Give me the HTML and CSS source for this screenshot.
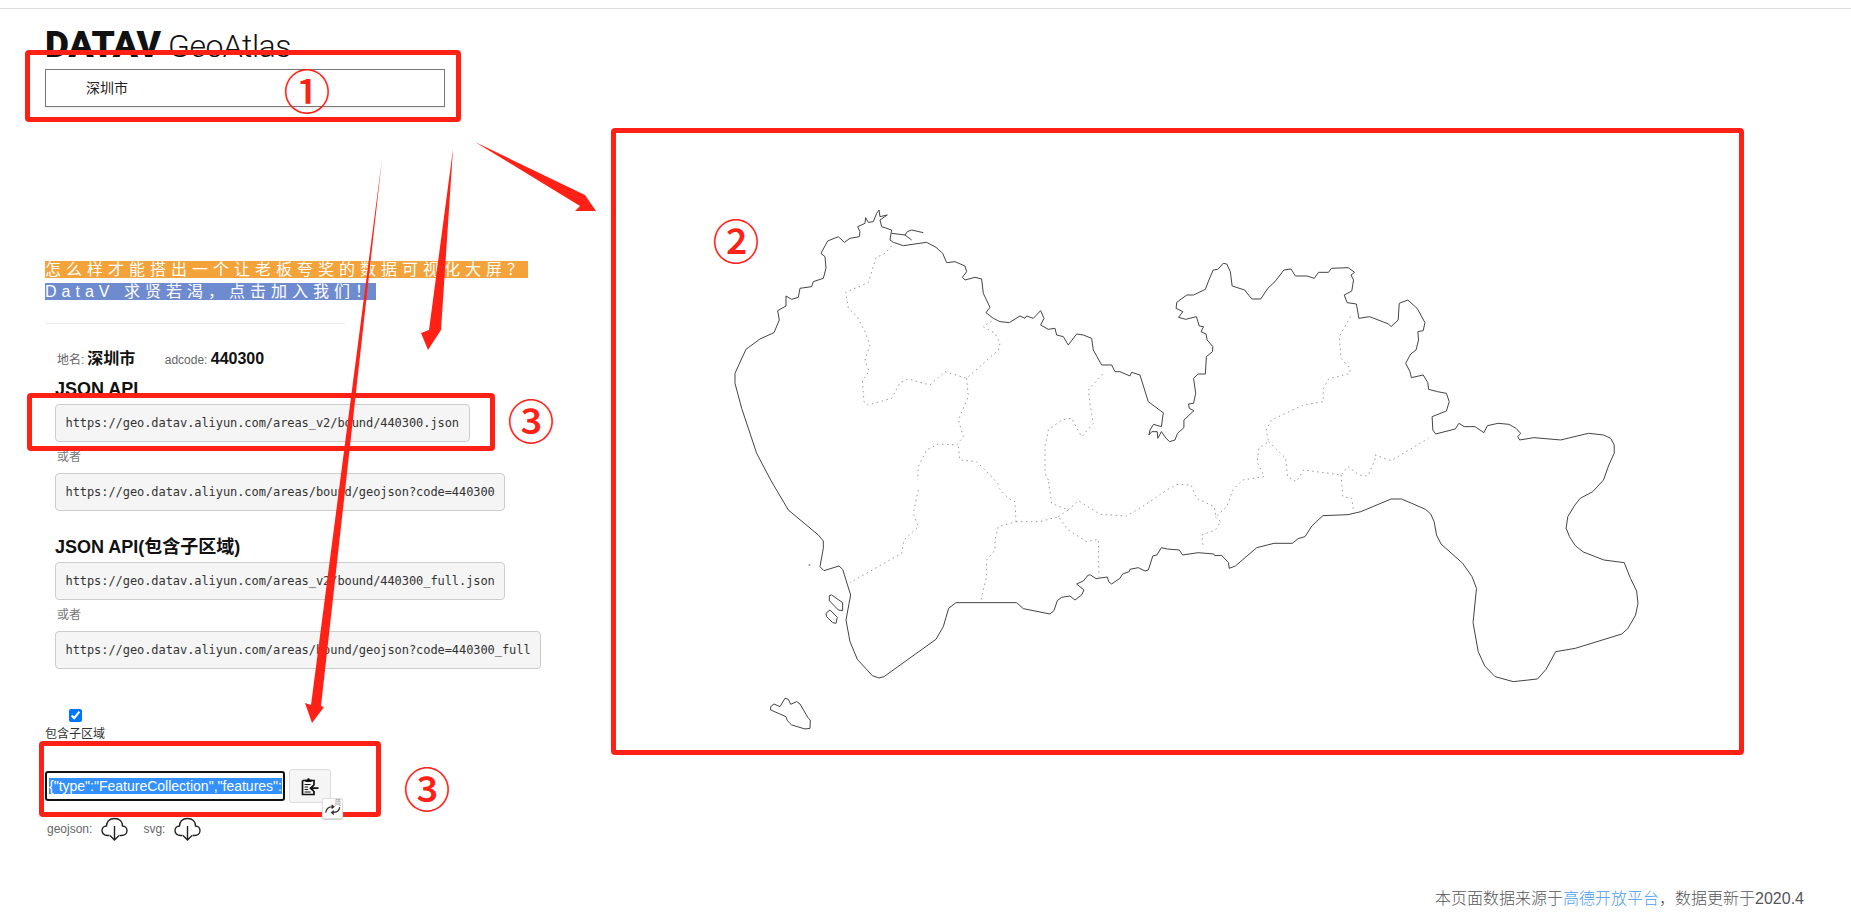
FILE: index.html
```html
<!DOCTYPE html>
<html lang="zh-CN">
  <head>
    <meta charset="utf-8" />
    <title>DataV GeoAtlas</title>
    <link rel="stylesheet" href="styles.css">
  </head>
  <body>
    <div class="top-line"></div>

    <div class="layout">
      <aside class="side">
        <div class="logo"><b>DATAV</b> <span>GeoAtlas</span></div>
        <div class="search">深圳市</div>

        <div class="banner">
          <span class="banner-line orange">怎么样才能搭出一个让老板夸奖的数据可视化大屏？</span>
          <span class="banner-line blue">DataV 求贤若渴，点击加入我们！</span>
        </div>
        <div class="divider"></div>

        <div class="info">
          <span class="info-label">地名:</span><strong class="place">深圳市</strong>
          <span class="info-label adcode">adcode:</span> <strong>440300</strong>
        </div>

        <div class="api">
          <h3>JSON API</h3>
          <pre>https://geo.datav.aliyun.com/areas_v2/bound/440300.json</pre>
          <p class="or">或者</p>
          <pre>https://geo.datav.aliyun.com/areas/bound/geojson?code=440300</pre>
          <h3 class="second">JSON API(包含子区域)</h3>
          <pre>https://geo.datav.aliyun.com/areas_v2/bound/440300_full.json</pre>
          <p class="or">或者</p>
          <pre>https://geo.datav.aliyun.com/areas/bound/geojson?code=440300_full</pre>
        </div>

        <label class="toggle">
          <input type="checkbox" checked />
          <span>包含子区域</span>
        </label>

        <div class="copy-row">
          <div class="json-box"><span class="selected">{"type":"FeatureCollection","features":</span></div>
          <button class="copy-btn" type="button">
            <svg width="18" height="19" viewBox="0 0 18 19">
              <path d="M1.500 3.500h3.500M10 3.500h3v5M13 14v3.500H1.500V3.500" fill="none" stroke="#111" stroke-width="1.700" />
              <path d="M4.500 5V2.600h1.700a1.300 1.300 0 0 1 2.600 0h1.700V5z" fill="#111" />
              <path d="M3.600 7.500h6M3.600 10h3.500M3.600 12.500h3.500M3.600 15h6" stroke="#111" stroke-width="1.100" />
              <path d="M17.500 11.200H10M12.800 8.200l-3.300 3 3.300 3" fill="none" stroke="#111" stroke-width="1.800" />
            </svg>
          </button>
        </div>

        <div class="downloads">
          <span>geojson:</span>
          <svg class="cloud" width="27" height="24" viewBox="0 0 27 24">
            <path d="M8.500 18.500H6.500C3 18.500 1 16 1 13.500C1 11 3 9 5.500 9C5.500 5 8 1.500 13.500 1.500C19 1.500 21.500 5 21.500 9C24 9 26 11 26 13.500C26 16 24 18.500 20.500 18.500H18.500" fill="none" stroke="#222" stroke-width="1.400" />
            <path d="M13.500 9V23M9 18.500l4.500 4.500 4.500-4.500" fill="none" stroke="#222" stroke-width="1.400" />
          </svg>
          <span class="dl-svg">svg:</span>
          <svg class="cloud" width="27" height="24" viewBox="0 0 27 24">
            <path d="M8.500 18.500H6.500C3 18.500 1 16 1 13.500C1 11 3 9 5.500 9C5.500 5 8 1.500 13.500 1.500C19 1.500 21.500 5 21.500 9C24 9 26 11 26 13.500C26 16 24 18.500 20.500 18.500H18.500" fill="none" stroke="#222" stroke-width="1.400" />
            <path d="M13.500 9V23M9 18.500l4.500 4.500 4.500-4.500" fill="none" stroke="#222" stroke-width="1.400" />
          </svg>
        </div>
      </aside>

      <!-- map traced in page coordinates, one group per traced region -->
      <svg class="map" width="1133" height="627" viewBox="611 128 1133 627">
        <g transform="translate(700 190) scale(.3333)">
          <polyline class="coast" points="212,870 170,790 125,655 105,580 105,550 138,478 180,447 222,428 238,390 233,362 258,348 258,318 275,328 295,322 300,295 335,290 340,275 370,265 378,235 375,200 363,190 383,153 415,140 433,157 450,145 478,140 480,125 473,110 495,100 497,83 505,97 520,95 530,70 537,60 540,80 562,75 540,90 545,110 575,120 570,150 580,157 610,167 680,157 708,172 728,190 740,218 765,215 795,228 800,245 787,262 795,270 825,262 845,267 850,310 870,352 858,368 880,385 900,395 928,398 960,378 975,385 980,378 1000,385 1022,362 1032,385 1022,405 1045,418 1065,415 1070,435 1090,440 1105,465 1130,432 1150,435 1175,445 1180,480 1205,525 1235,525 1245,545 1260,545 1290,558 1295,547 1320,555 1345,635 1392,670" />
          <polyline class="coast" points="575,130 615,135 635,150" />
          <polyline class="coast" points="615,135 622,125 635,120 670,128" />
          <polyline class="border" points="575,168 555,190 528,203 505,278 437,307 445,355 470,378 495,425 510,465 495,510 507,545 487,570 492,635 505,645 575,625 600,578 625,567 690,585 735,545 800,565 895,480 900,460 885,430 850,410 880,390" />
          <polyline class="border" points="800,565 805,620 775,690 790,740 770,765 715,762 680,780 655,830 653,870" />
          <polyline class="border" points="775,770 780,810 830,815 870,855 897,885" />
          <polyline class="border" points="1045,870 1035,850 1035,770 1045,720 1085,690 1115,685 1145,740 1180,700 1170,640 1165,600 1215,545" />
        </g>

        <g transform="translate(1100 230) scale(.3571 .3333)">
          <polyline class="coast" points="177,550 172,590 150,583 140,600 137,615 145,605 160,605 162,625 172,605 185,625 195,635 210,630 217,610 235,593 235,570 263,542 250,535 248,522 262,520 268,490 262,445 275,432 295,432 298,380 315,365 316,350 300,330 297,312 283,305 290,290 278,288 270,260 240,268 220,262 232,245 213,235 215,217 243,195 262,195 295,178 305,150 317,120 330,118 345,100 355,102 365,125 370,168 405,180 425,207 450,207 470,175 490,155 515,120 535,117 547,138 580,138 600,145 612,127 640,127 648,115 695,113 713,127 703,135 710,150 705,183 684,195 692,218 718,222 725,265 755,260 808,282 815,290 835,270 838,220 862,210 888,235 900,258 910,278 905,302 890,305 892,330 885,360 870,372 856,400 868,425 872,443 905,435 918,458 920,478 945,485 970,490 978,515 970,543 930,560 932,600 940,612 995,597 1005,580 1020,590 1050,590 1075,608 1085,587 1115,580 1145,583 1165,595 1178,610 1170,620 1175,630 1215,623 1290,630 1368,610 1410,615 1430,625 1440,645 1440,670 1425,705 1410,750 1380,785 1345,805 1330,825 1310,860 1305,897" />
          <polyline class="border" points="215,763 255,765 270,805 320,830 325,860 355,830 372,780 400,750 460,740 440,695 445,655 472,635 465,600 480,570 570,525 625,515 625,478 640,447 700,430 700,415 675,385 670,320 705,253" />
          <polyline class="border" points="472,635 520,685 525,740 550,755 570,720 675,735 695,710 725,735 750,738 770,690 770,675 815,692 920,625" />
          <polyline class="border" points="675,735 680,800 705,805 710,845" />
        </g>

        <g transform="translate(1150 480) scale(.3444 .3333)">
          <polyline class="coast" points="1209,146 1218,170 1235,197 1258,216 1318,240 1377,248 1395,295 1413,333 1417,370 1410,405 1388,445 1370,462 1235,505 1178,515 1150,568 1125,597 1055,605 1002,590 972,558 953,515 938,428 948,325 935,290 908,250 845,192 832,165 825,125 815,102 800,88 760,70 730,57 700,57 612,95 575,104 502,107 470,138 450,170 430,176 413,190 360,190 310,203 248,258 230,265 228,248 208,226 188,227 185,222 140,218 95,225 85,210 50,207 33,203 20,225 8,228 0,255" />
          <polyline class="border" points="190,110 205,125 190,150 150,165 155,205" />
        </g>

        <g transform="translate(700 480) scale(.3333)">
          <polyline class="coast" points="1350,255 1345,270 1335,273 1315,263 1290,268 1288,275 1268,282 1260,295 1235,312 1226,305 1222,291 1188,296 1172,285 1165,285 1150,303 1130,312 1152,330 1145,345 1125,360 1110,348 1085,352 1072,362 1062,392 1050,402 970,386 950,368 768,368 746,385 730,440 708,478 552,590 537,594 517,587 472,538 450,485 438,420 452,345 428,268 417,258 372,272 360,260 370,205 370,183 355,165 265,90 212,0" />
          <polygon class="coast" points="212,680 222,672 240,680 255,655 265,658 272,673 290,665 300,672 325,715 331,720 330,745 315,747 275,735 262,722 258,710 212,690" />
          <polygon class="coast" points="388,347 395,345 428,368 428,392 415,390 388,362" />
          <polygon class="coast" points="378,400 390,390 412,412 408,430 398,428 380,410" />
          <polyline class="coast" points="326,255 331,255" />
          <polyline class="border" points="655,30 640,100 655,140 612,180 605,220 450,308" />
          <polyline class="border" points="897,25 925,55 945,65 948,125 895,140 885,180 885,210 860,240 860,290 845,350 843,365" />
          <polyline class="border" points="948,125 1020,125 1075,110 1105,150 1160,185 1195,178 1197,290" />
          <polyline class="border" points="1075,110 1105,90 1055,70 1045,0" />
          <polyline class="border" points="1105,90 1135,62 1200,103 1280,108 1335,75 1400,30 1435,12" />
        </g>
      </svg>
    </div>

    <footer class="source">本页面数据来源于<a href="#">高德开放平台</a>，数据更新于2020.4</footer>

    <!-- red notes drawn over the page -->
    <svg class="arrows" width="1851" height="922" viewBox="0 0 1851 922">
      <polygon points="475,142 585,195 596,211 575,211 580,206" />
      <polygon points="453,149 441,330 439,333 428,350 421,333 429,330" />
      <polygon points="382,159 321,706 324,707 312,723 305,703 311,705" />
    </svg>
    <div class="note-box note-search"></div>
    <div class="note-box note-map"></div>
    <div class="note-box note-api"></div>
    <div class="note-box note-copy"></div>
    <span class="note-num num-one">①</span>
    <span class="note-num num-two">②</span>
    <span class="note-num num-three-a">③</span>
    <span class="note-num num-three-b">③</span>

    <div class="translate-badge">
      <svg width="19" height="19" viewBox="0 0 21 21">
        <path d="M3 15C4 10 7 8.500 11 8.500M9.500 6.500l2.500 2-2.500 2" fill="none" stroke="#333" stroke-width="1.400" />
        <path d="M18.500 9C18 13 15 15 10.500 15M12 13l-2.500 2 2.500 2" fill="none" stroke="#333" stroke-width="1.400" />
        <text x="13" y="7" class="badge-char">简</text>
      </svg>
    </div>
  </body>
</html>
```

FILE: styles.css
```css
:root {
  --red: #ff2116;
  --font: "Liberation Sans", "Noto Sans CJK SC", sans-serif;
}

* {
  box-sizing: border-box;
}

html,
body {
  margin: 0;
  height: 922px;
  overflow: hidden;
  background: #fff;
  color: #333;
  font-family: var(--font);
  font-size: 12px;
}

body {
  position: relative;
}

.top-line {
  height: 9px;
  border-bottom: 1px solid #ddd;
}

.layout {
  display: flex;
  height: 832px;
}

.side {
  flex: none;
  width: 611px;
  padding-left: 45px;
}

.logo {
  margin-top: 24px;
  height: 24px;
  line-height: 24px;
  font-family: Roboto, sans-serif;
  font-size: 32px;
  word-spacing: -1px;
  color: #111;
  white-space: nowrap;
}

.logo b {
  font-size: 37px;
  font-weight: 900;
}

.logo span {
  font-weight: 300;
  letter-spacing: -0.5px;
}

.search {
  position: relative;
  margin-top: 12px;
  width: 400px;
  height: 38px;
  padding-left: 40px;
  line-height: 36px;
  font-size: 14px;
  color: #222;
  background: #fff;
  border: 1px solid #777;
  box-shadow: 0 2px 2px #eee;
}

.banner {
  margin-top: 154px;
}

.banner-line {
  display: block;
  width: fit-content;
  height: 17px;
  line-height: 17px;
  margin-bottom: 5px;
  font-size: 16px;
  letter-spacing: 5px;
  color: #fff;
  white-space: nowrap;
}

.orange {
  background: #f4a23a;
}

.blue {
  background: #6f8bd0;
}

.divider {
  margin-top: 23px;
  width: 300px;
  height: 1px;
  background: #eee;
}

.info {
  margin-top: 25px;
  padding-left: 12px;
  height: 20px;
  line-height: 20px;
  white-space: nowrap;
}

.info-label {
  color: #666;
}

.info strong {
  font-size: 16px;
  color: #111;
}

.info .place {
  margin-left: 3px;
}

.adcode {
  margin-left: 26px;
}

.api {
  padding-left: 10px;
}

.api h3 {
  margin: 10px 0 5px;
  height: 20px;
  line-height: 20px;
  font-size: 18px;
  font-weight: bold;
  color: #111;
}

.api h3.second {
  margin-top: 26px;
}

.api pre {
  display: block;
  width: fit-content;
  height: 38px;
  margin: 0;
  padding: 0 9.5px;
  line-height: 36px;
  font-family: "DejaVu Sans Mono", "Liberation Mono", monospace;
  font-size: 12px;
  letter-spacing: -0.07px;
  color: #333;
  background: #f5f5f5;
  border: 1px solid #ccc;
  border-radius: 4px;
}

.or {
  margin: 8px 0 9px 2px;
  height: 14px;
  line-height: 14px;
  color: #777;
}

.toggle {
  display: flex;
  flex-direction: column;
  align-items: center;
  width: 60px;
  margin-top: 40px;
  line-height: 14px;
  color: #333;
}

.toggle input {
  margin: 0 0 5px;
}

.copy-row {
  display: flex;
  align-items: center;
  gap: 4px;
  margin-top: 28px;
}

.json-box {
  width: 240px;
  height: 30px;
  padding: 5px 2px;
  overflow: hidden;
  font-size: 14px;
  line-height: 16px;
  white-space: nowrap;
  border: 2px solid #111;
  border-radius: 3px;
}

.selected {
  color: #fff;
  background: #3390ff;
}

.copy-btn {
  display: flex;
  align-items: center;
  justify-content: center;
  width: 42px;
  height: 34px;
  padding: 0;
  background: #f5f5f5;
  border: 1px solid #ddd;
  border-radius: 3px;
}

.downloads {
  display: flex;
  align-items: center;
  margin-top: 14px;
  padding-left: 2px;
  height: 24px;
  color: #666;
}

.cloud {
  margin-left: 9px;
}

.dl-svg {
  margin-left: 15px;
}

.map {
  flex: none;
  margin-top: 119px;
}

.coast,
.border {
  fill: none;
  vector-effect: non-scaling-stroke;
}

.coast {
  stroke: #444;
  stroke-width: 1;
}

.border {
  stroke: #999;
  stroke-width: 1;
  stroke-dasharray: 1.5 3.5;
}

.source {
  margin-top: 49px;
  padding-right: 47px;
  line-height: 18px;
  text-align: right;
  font-size: 16px;
  font-weight: 300;
  color: #555;
}

.source a {
  color: #4a9cf5;
  text-decoration: none;
}

/* notes over the page */
.arrows {
  position: absolute;
  top: 0;
  left: 0;
  pointer-events: none;
}

.arrows polygon {
  fill: var(--red);
}

.note-box {
  position: absolute;
  border: 5px solid var(--red);
  border-radius: 4px;
  pointer-events: none;
}

.note-search {
  left: 25px;
  top: 50px;
  width: 436px;
  height: 72px;
}

.note-map {
  left: 611px;
  top: 128px;
  width: 1133px;
  height: 627px;
}

.note-api {
  left: 27px;
  top: 393px;
  width: 468px;
  height: 58px;
}

.note-copy {
  left: 39px;
  top: 741px;
  width: 342px;
  height: 76px;
}

.note-num {
  position: absolute;
  width: 50px;
  height: 50px;
  line-height: 50px;
  text-align: center;
  font-family: "Noto Sans CJK SC", sans-serif;
  font-size: 47px;
  font-weight: 500;
  color: var(--red);
}

.num-one {
  left: 282px;
  top: 64px;
}

.num-two {
  left: 711px;
  top: 214px;
}

.num-three-a {
  left: 506px;
  top: 394px;
}

.num-three-b {
  left: 402px;
  top: 762px;
}

.translate-badge {
  position: absolute;
  left: 322px;
  top: 798px;
  width: 21px;
  height: 21px;
  background: #fff;
  border: 1px solid #ddd;
  border-radius: 2px;
  box-shadow: 0 1px 1px #ccc;
}

.translate-badge svg {
  display: block;
}

.badge-char {
  font-size: 7px;
  fill: #888;
}
```
